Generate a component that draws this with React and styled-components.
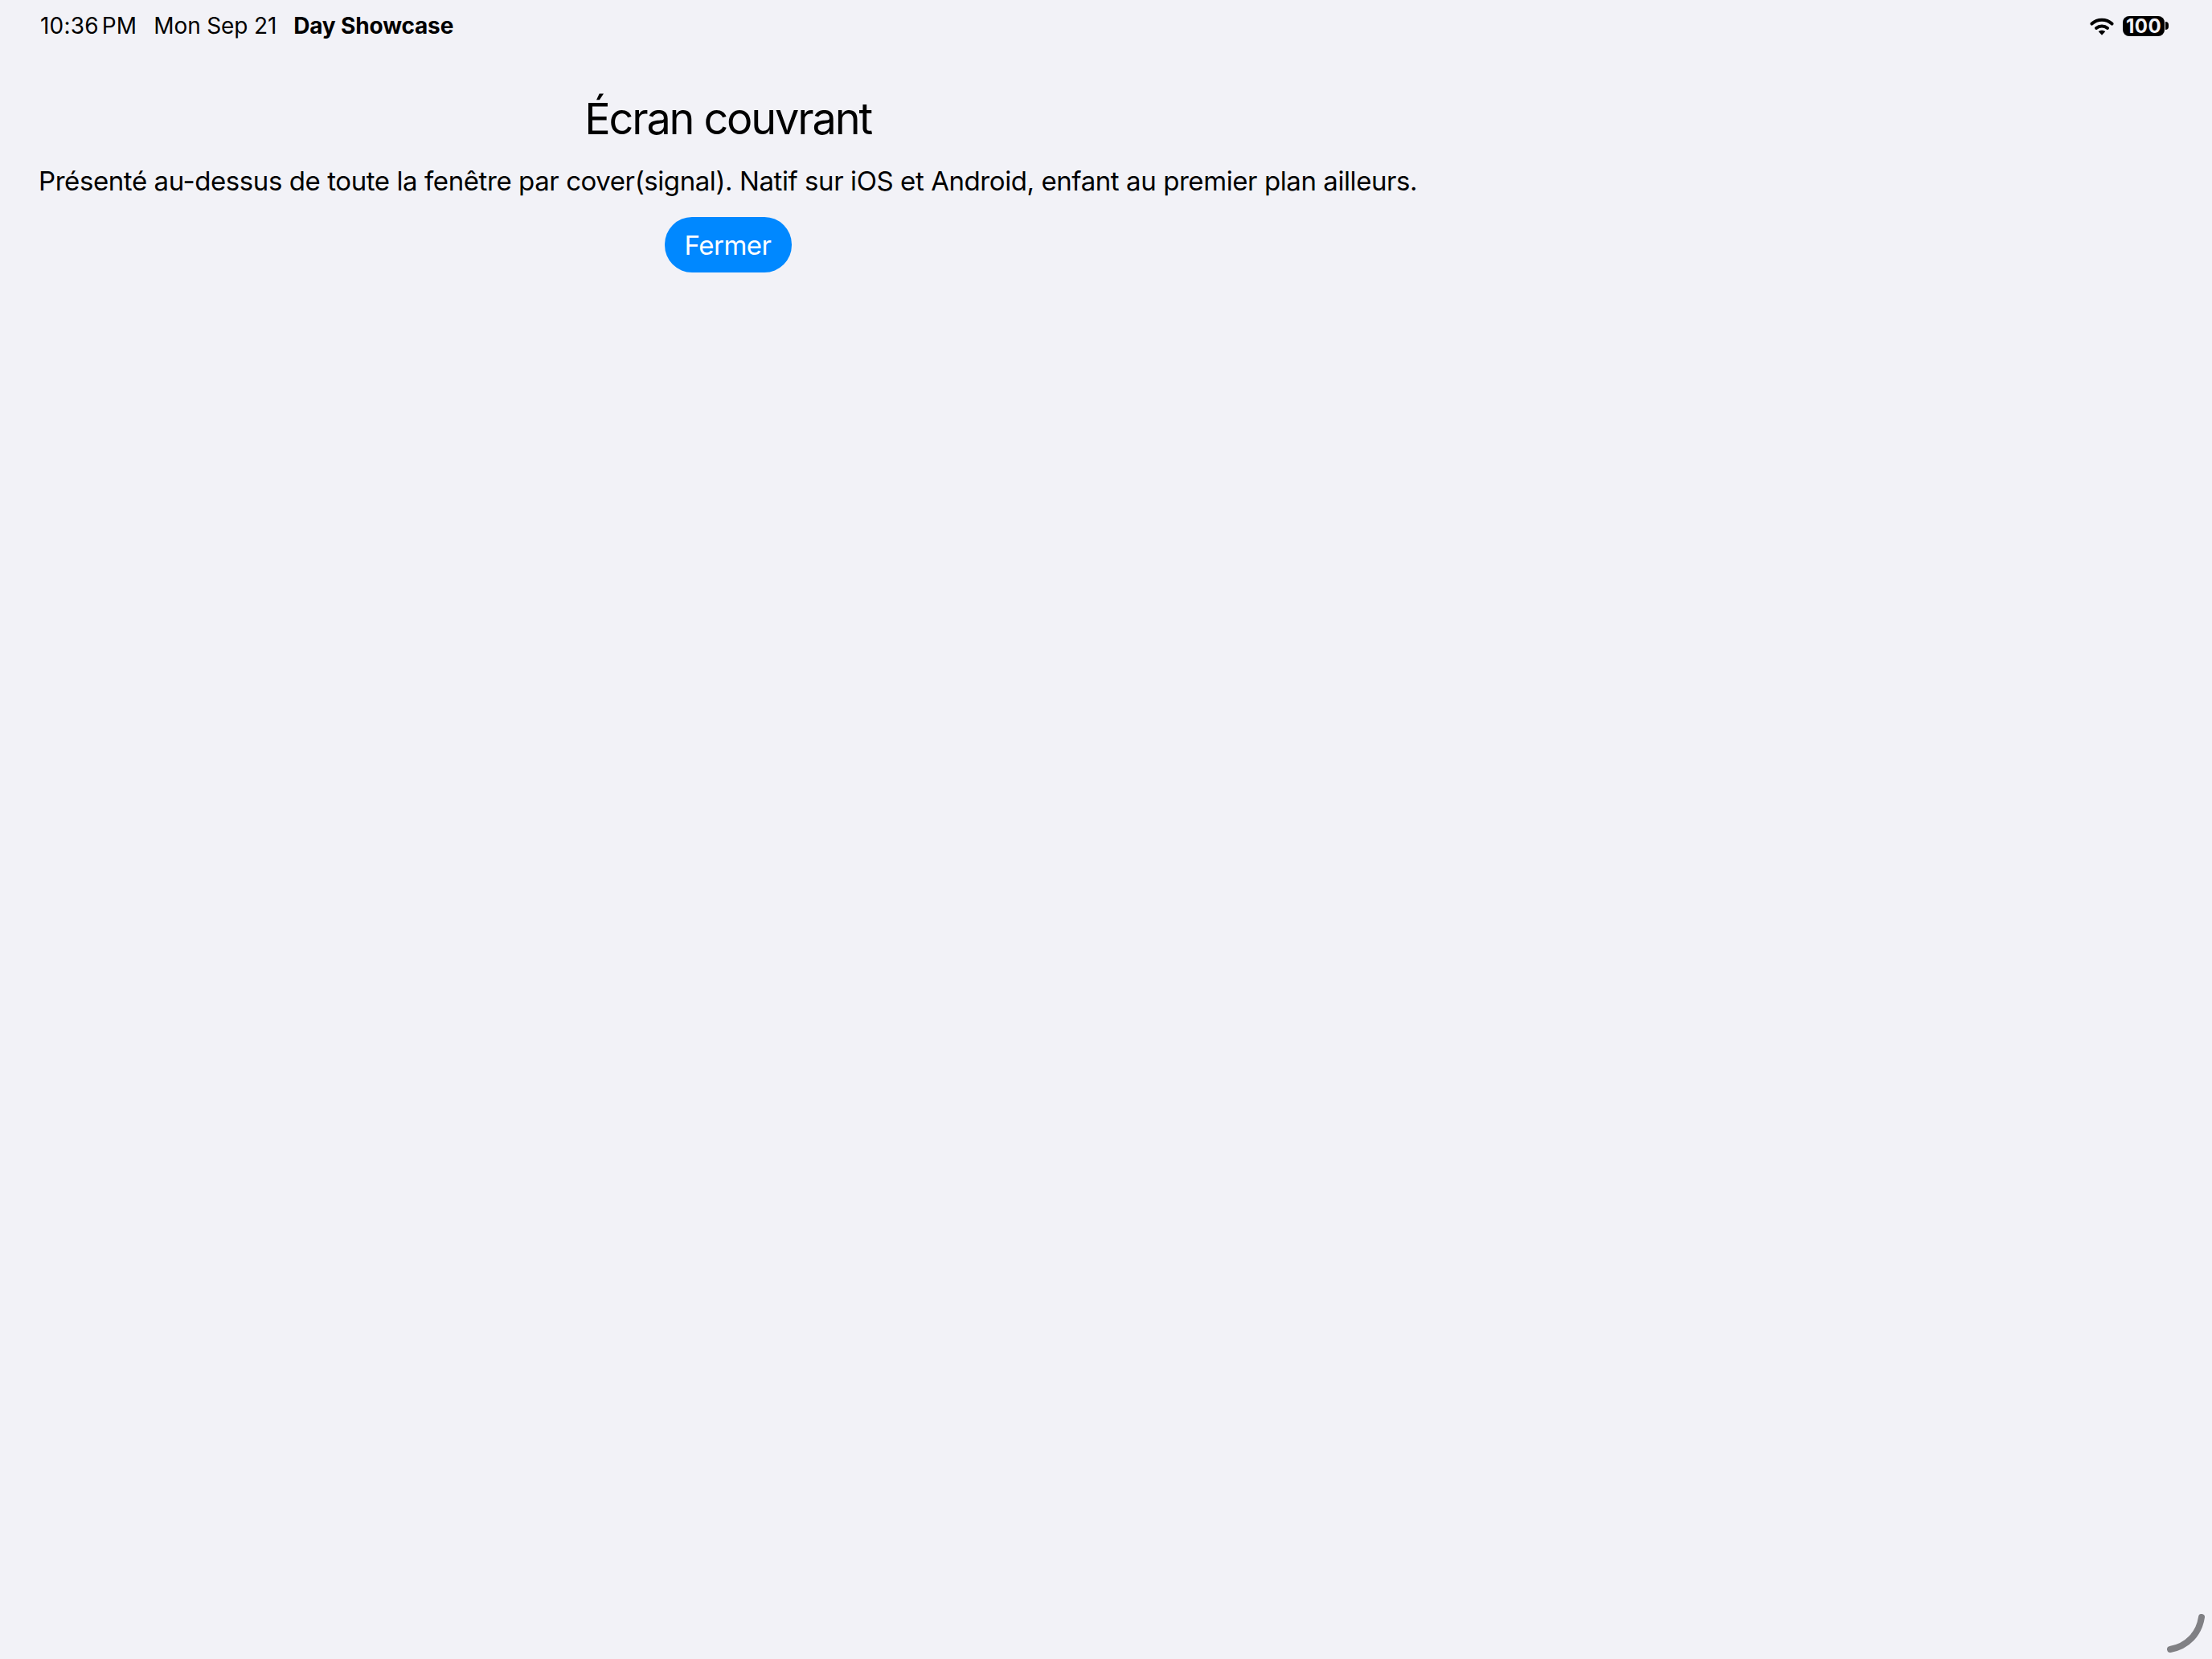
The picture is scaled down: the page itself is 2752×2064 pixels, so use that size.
import React from 'react'
import styled, { createGlobalStyle } from 'styled-components'

const Global = createGlobalStyle`
html, body {
  margin: 0;
  padding: 0;
  background: #f2f2f7;
}
body {
  font-family: Inter, "Liberation Sans", sans-serif;
  color: #000;
}
`

function WifiIcon() {
  return (
    <svg width="30" height="23" viewBox="0 0 30 23">
      <path d="M2.5 8.6C9.5 2.2 20.500 2.200 27.500 8.600" fill="none" stroke="#000" strokeWidth="4" strokeLinecap="round" />
      <path d="M8 14C12 10.500 18 10.500 22 14" fill="none" stroke="#000" strokeWidth="4" strokeLinecap="round" />
      <path d="M10.800 18.300C13.200 16.300 16.800 16.300 19.200 18.300L15 22.800Z" fill="#000" />
    </svg>
  )
}

function CornerArc() {
  return (
    <svg width="48" height="48" viewBox="0 0 48 48">
      <path d="M43 4C40 24 26 40 4 44" fill="none" stroke="#808084" strokeWidth="8" strokeLinecap="round" />
    </svg>
  )
}

export default function App() {
  return (
    <Screen>
      <Global />
      <StatusBar>
        <LeftGroup>
          <Clock>10:36<ClockGap />PM</Clock>
          <StatusText>Mon Sep 21</StatusText>
          <AppName>Day Showcase</AppName>
        </LeftGroup>
        <RightGroup>
          <WifiIcon />
          <Battery>
            <BatteryBody>100</BatteryBody>
            <BatteryCap />
          </Battery>
        </RightGroup>
      </StatusBar>
      <Content>
        <Title>Écran couvrant</Title>
        <Description>Présenté au-dessus de toute la fenêtre par cover(signal). Natif sur iOS et Android, enfant au premier plan ailleurs.</Description>
        <CloseButton>Fermer</CloseButton>
      </Content>
      <Corner>
        <CornerArc />
      </Corner>
    </Screen>
  )
}

const Screen = styled.div`
position: relative;
width: 2752px;
height: 2064px;
overflow: hidden;
background: #f2f2f7;
`

const StatusBar = styled.div`
display: flex;
justify-content: space-between;
align-items: center;
height: 64px;
padding: 0 54px 0 50px;
`

const LeftGroup = styled.div`
display: flex;
align-items: center;
gap: 21px;
`

const StatusText = styled.span`
font-size: 28px;
font-weight: 400;
letter-spacing: -0.15px;
`

const Clock = styled(StatusText)`
display: flex;
letter-spacing: 0.2px;
`

const ClockGap = styled.span`
width: 4px;
`

const AppName = styled(StatusText)`
font-weight: 700;
`

const RightGroup = styled.div`
display: flex;
align-items: center;
gap: 11px;
`

const Battery = styled.div`
display: flex;
align-items: center;
gap: 1px;
`

const BatteryBody = styled.div`
display: flex;
justify-content: center;
align-items: center;
width: 52px;
height: 25px;
border-radius: 8px;
background: #000;
color: #f2f2f7;
font-size: 24px;
font-weight: 700;
letter-spacing: 0.5px;
`

const BatteryCap = styled.div`
width: 4px;
height: 10px;
border-radius: 0 5px 5px 0;
background: #000;
`

const Content = styled.div`
display: flex;
flex-direction: column;
align-items: center;
width: fit-content;
margin-left: 48px;
padding-top: 50px;
`

const Title = styled.h1`
margin: 0;
font-size: 54px;
line-height: 68px;
font-weight: 400;
letter-spacing: -2.15px;
`

const Description = styled.p`
margin: 21px 0 0;
font-size: 33px;
line-height: 44px;
font-weight: 400;
letter-spacing: -0.42px;
`

const CloseButton = styled.button`
display: flex;
justify-content: center;
align-items: center;
width: 158px;
height: 69px;
margin-top: 23px;
padding: 0;
border: none;
border-radius: 34px;
background: #0088ff;
color: #fff;
font-family: inherit;
font-size: 33px;
font-weight: 400;
letter-spacing: -0.5px;
`

const Corner = styled.div`
position: absolute;
right: 8px;
bottom: 8px;
display: flex;
`
